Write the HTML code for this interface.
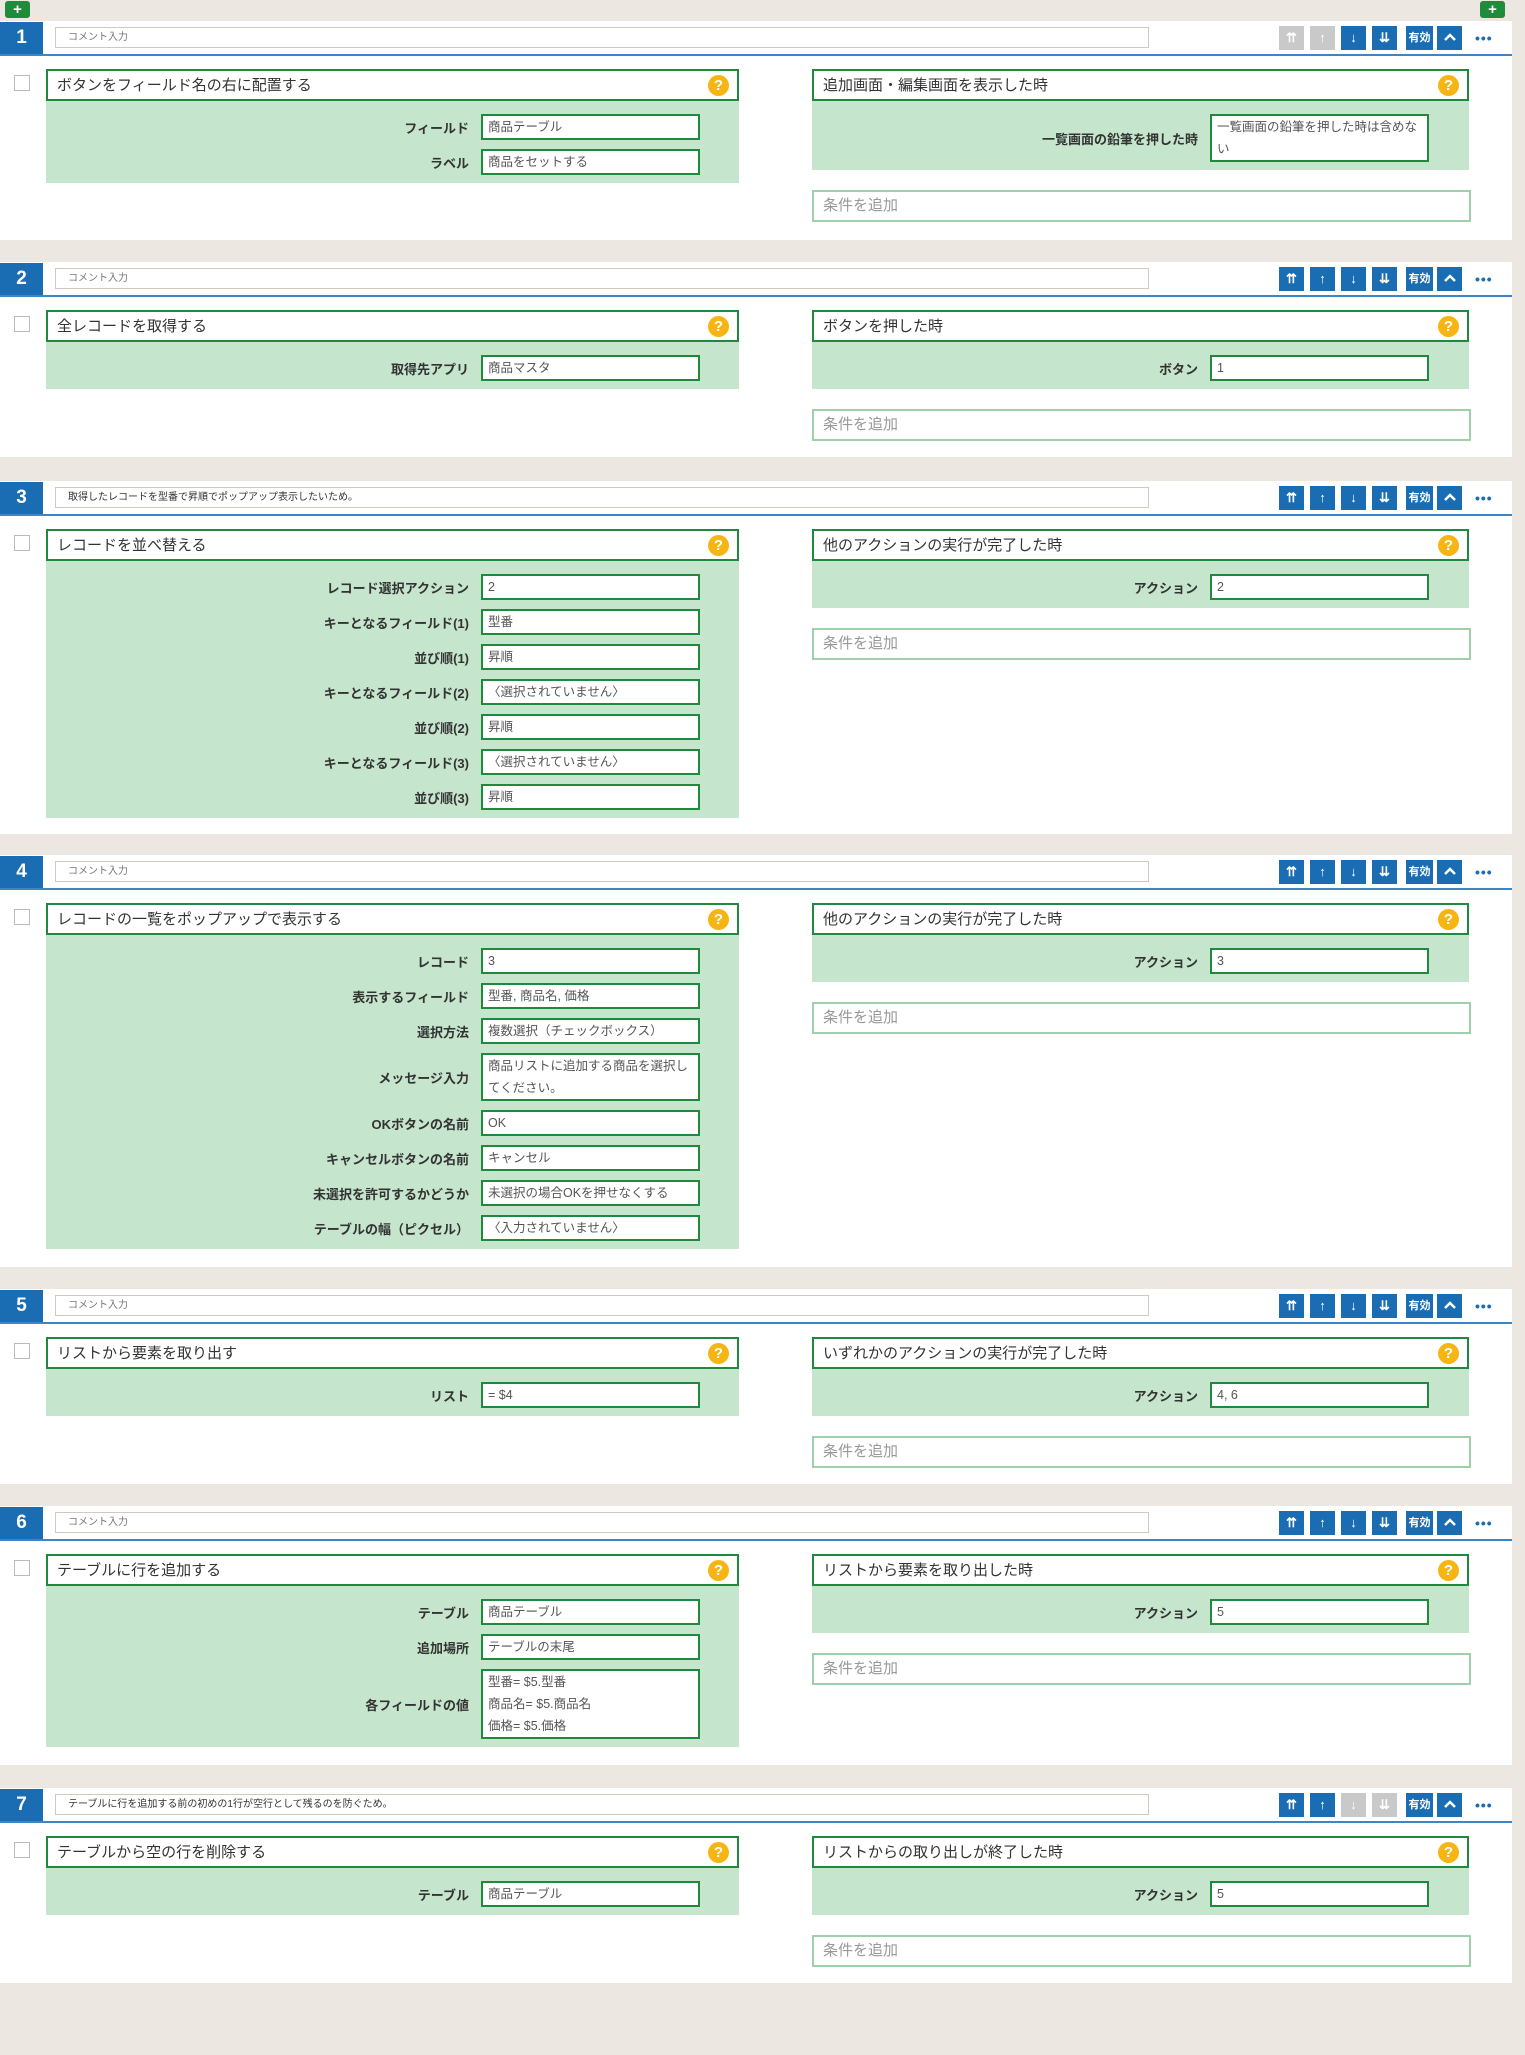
<!DOCTYPE html>
<html><head><meta charset="utf-8"><style>
body{margin:0;width:1525px;height:2055px;background:#ede7e1;font-family:"Liberation Sans","Noto Sans CJK JP",sans-serif;position:relative;overflow:hidden}
.plus{position:absolute;top:1px;width:25px;height:17px;background:#1e8c3a;border-radius:3px;color:#fff;font-weight:bold;font-size:15px;line-height:17px;text-align:center}
.blk{position:absolute;left:0;width:1512px;background:#fff}
.num{position:absolute;left:0;top:1px;width:43px;height:32px;background:#1a6cb3;color:#fff;font-size:19px;font-weight:bold;text-align:center;line-height:32px}
.line{position:absolute;left:0;top:33px;width:1512px;height:2px;background:#3d86c6}
.cmt{position:absolute;left:55px;top:6px;border:1px solid #cfc9c0;font-size:10px;color:#777;line-height:19px;padding-left:12px;box-sizing:border-box;width:1094px;height:21px}
.b{position:absolute;top:5px;width:25px;height:24px;background:#1a6cb3;color:#fff;font-size:13px;font-weight:bold;text-align:center;line-height:24px}
.b svg{display:block;margin:6px auto 0}
.g{background:#c9c9c9}
.dots{position:absolute;top:5px;left:1475px;width:26px;height:24px;color:#1a6cb3;font-size:14px;font-weight:bold;line-height:24px;letter-spacing:1px}
.chk{position:absolute;left:14px;top:54px;width:14px;height:14px;border:1px solid #bbb}
.col{position:absolute;top:48px}
.L{left:46px;width:693px}.R{left:812px;width:657px}
.tt{height:32px;border:2px solid #1f8a3e;box-sizing:border-box;font-size:15px;color:#333;line-height:29px;padding-left:9px;position:relative;background:#fff}
.q{position:absolute;right:8px;top:4px;width:21px;height:21px;border-radius:50%;background:#f6b512;color:#fff;font-weight:bold;font-size:15px;line-height:21px;text-align:center}
.gr{background:#c5e5cc;padding:13px 0 0}
.row{display:flex;align-items:center;margin-bottom:9px}
.row:last-child{margin-bottom:0;padding-bottom:8px}
.lb{font-size:13px;font-weight:bold;color:#333;text-align:right;padding-right:12px;box-sizing:border-box}
.L .lb{width:435px}.R .lb{width:398px}
.in{width:219px;min-height:26px;border:2px solid #1f8a3e;background:#fff;box-sizing:border-box;font-size:12.5px;color:#555;padding:0 5px;line-height:22px}
.cond{margin-top:20px;height:32px;border:2px solid #9fd0ab;box-sizing:border-box;font-size:15px;color:#999;line-height:28px;padding-left:9px;width:659px}
</style></head><body>
<div class="plus" style="left:5px">+</div>
<div class="plus" style="left:1480px">+</div>

<div class="blk" style="top:21px;height:219px">
<div class="num">1</div><div class="line"></div><div class="cmt">コメント入力</div>
<div class="b g" style="left:1279px">⇈</div><div class="b g" style="left:1310px">↑</div><div class="b" style="left:1341px">↓</div><div class="b" style="left:1372px">⇊</div><div class="b" style="left:1406px;width:27px;font-size:11px">有効</div><div class="b" style="left:1437px"><svg width="14" height="10" viewBox="0 0 14 10"><path d="M2 8 L7 3 L12 8" stroke="#fff" stroke-width="2.5" fill="none"/></svg></div><div class="dots">•••</div>
<div class="chk"></div>
<div class="col L"><div class="tt">ボタンをフィールド名の右に配置する<div class="q">?</div></div><div class="gr">
<div class="row"><div class="lb">フィールド</div><div class="in">商品テーブル</div></div>
<div class="row"><div class="lb">ラベル</div><div class="in">商品をセットする</div></div></div></div>
<div class="col R"><div class="tt">追加画面・編集画面を表示した時<div class="q">?</div></div><div class="gr">
<div class="row"><div class="lb">一覧画面の鉛筆を押した時</div><div class="in">一覧画面の鉛筆を押した時は含めない</div></div></div><div class="cond">条件を追加</div></div>
</div>

<div class="blk" style="top:262px;height:195px">
<div class="num">2</div><div class="line"></div><div class="cmt">コメント入力</div>
<div class="b" style="left:1279px">⇈</div><div class="b" style="left:1310px">↑</div><div class="b" style="left:1341px">↓</div><div class="b" style="left:1372px">⇊</div><div class="b" style="left:1406px;width:27px;font-size:11px">有効</div><div class="b" style="left:1437px"><svg width="14" height="10" viewBox="0 0 14 10"><path d="M2 8 L7 3 L12 8" stroke="#fff" stroke-width="2.5" fill="none"/></svg></div><div class="dots">•••</div>
<div class="chk"></div>
<div class="col L"><div class="tt">全レコードを取得する<div class="q">?</div></div><div class="gr">
<div class="row"><div class="lb">取得先アプリ</div><div class="in">商品マスタ</div></div></div></div>
<div class="col R"><div class="tt">ボタンを押した時<div class="q">?</div></div><div class="gr">
<div class="row"><div class="lb">ボタン</div><div class="in">1</div></div></div><div class="cond">条件を追加</div></div>
</div>

<div class="blk" style="top:481px;height:353px">
<div class="num">3</div><div class="line"></div><div class="cmt" style="color:#333">取得したレコードを型番で昇順でポップアップ表示したいため。</div>
<div class="b" style="left:1279px">⇈</div><div class="b" style="left:1310px">↑</div><div class="b" style="left:1341px">↓</div><div class="b" style="left:1372px">⇊</div><div class="b" style="left:1406px;width:27px;font-size:11px">有効</div><div class="b" style="left:1437px"><svg width="14" height="10" viewBox="0 0 14 10"><path d="M2 8 L7 3 L12 8" stroke="#fff" stroke-width="2.5" fill="none"/></svg></div><div class="dots">•••</div>
<div class="chk"></div>
<div class="col L"><div class="tt">レコードを並べ替える<div class="q">?</div></div><div class="gr">
<div class="row"><div class="lb">レコード選択アクション</div><div class="in">2</div></div>
<div class="row"><div class="lb">キーとなるフィールド(1)</div><div class="in">型番</div></div>
<div class="row"><div class="lb">並び順(1)</div><div class="in">昇順</div></div>
<div class="row"><div class="lb">キーとなるフィールド(2)</div><div class="in">〈選択されていません〉</div></div>
<div class="row"><div class="lb">並び順(2)</div><div class="in">昇順</div></div>
<div class="row"><div class="lb">キーとなるフィールド(3)</div><div class="in">〈選択されていません〉</div></div>
<div class="row"><div class="lb">並び順(3)</div><div class="in">昇順</div></div></div></div>
<div class="col R"><div class="tt">他のアクションの実行が完了した時<div class="q">?</div></div><div class="gr">
<div class="row"><div class="lb">アクション</div><div class="in">2</div></div></div><div class="cond">条件を追加</div></div>
</div>

<div class="blk" style="top:855px;height:412px">
<div class="num">4</div><div class="line"></div><div class="cmt">コメント入力</div>
<div class="b" style="left:1279px">⇈</div><div class="b" style="left:1310px">↑</div><div class="b" style="left:1341px">↓</div><div class="b" style="left:1372px">⇊</div><div class="b" style="left:1406px;width:27px;font-size:11px">有効</div><div class="b" style="left:1437px"><svg width="14" height="10" viewBox="0 0 14 10"><path d="M2 8 L7 3 L12 8" stroke="#fff" stroke-width="2.5" fill="none"/></svg></div><div class="dots">•••</div>
<div class="chk"></div>
<div class="col L"><div class="tt">レコードの一覧をポップアップで表示する<div class="q">?</div></div><div class="gr">
<div class="row"><div class="lb">レコード</div><div class="in">3</div></div>
<div class="row"><div class="lb">表示するフィールド</div><div class="in">型番, 商品名, 価格</div></div>
<div class="row"><div class="lb">選択方法</div><div class="in">複数選択（チェックボックス）</div></div>
<div class="row"><div class="lb">メッセージ入力</div><div class="in">商品リストに追加する商品を選択してください。</div></div>
<div class="row"><div class="lb">OKボタンの名前</div><div class="in">OK</div></div>
<div class="row"><div class="lb">キャンセルボタンの名前</div><div class="in">キャンセル</div></div>
<div class="row"><div class="lb">未選択を許可するかどうか</div><div class="in">未選択の場合OKを押せなくする</div></div>
<div class="row"><div class="lb">テーブルの幅（ピクセル）</div><div class="in">〈入力されていません〉</div></div></div></div>
<div class="col R"><div class="tt">他のアクションの実行が完了した時<div class="q">?</div></div><div class="gr">
<div class="row"><div class="lb">アクション</div><div class="in">3</div></div></div><div class="cond">条件を追加</div></div>
</div>

<div class="blk" style="top:1289px;height:195px">
<div class="num">5</div><div class="line"></div><div class="cmt">コメント入力</div>
<div class="b" style="left:1279px">⇈</div><div class="b" style="left:1310px">↑</div><div class="b" style="left:1341px">↓</div><div class="b" style="left:1372px">⇊</div><div class="b" style="left:1406px;width:27px;font-size:11px">有効</div><div class="b" style="left:1437px"><svg width="14" height="10" viewBox="0 0 14 10"><path d="M2 8 L7 3 L12 8" stroke="#fff" stroke-width="2.5" fill="none"/></svg></div><div class="dots">•••</div>
<div class="chk"></div>
<div class="col L"><div class="tt">リストから要素を取り出す<div class="q">?</div></div><div class="gr">
<div class="row"><div class="lb">リスト</div><div class="in">= $4</div></div></div></div>
<div class="col R"><div class="tt">いずれかのアクションの実行が完了した時<div class="q">?</div></div><div class="gr">
<div class="row"><div class="lb">アクション</div><div class="in">4, 6</div></div></div><div class="cond">条件を追加</div></div>
</div>

<div class="blk" style="top:1506px;height:259px">
<div class="num">6</div><div class="line"></div><div class="cmt">コメント入力</div>
<div class="b" style="left:1279px">⇈</div><div class="b" style="left:1310px">↑</div><div class="b" style="left:1341px">↓</div><div class="b" style="left:1372px">⇊</div><div class="b" style="left:1406px;width:27px;font-size:11px">有効</div><div class="b" style="left:1437px"><svg width="14" height="10" viewBox="0 0 14 10"><path d="M2 8 L7 3 L12 8" stroke="#fff" stroke-width="2.5" fill="none"/></svg></div><div class="dots">•••</div>
<div class="chk"></div>
<div class="col L"><div class="tt">テーブルに行を追加する<div class="q">?</div></div><div class="gr">
<div class="row"><div class="lb">テーブル</div><div class="in">商品テーブル</div></div>
<div class="row"><div class="lb">追加場所</div><div class="in">テーブルの末尾</div></div>
<div class="row"><div class="lb">各フィールドの値</div><div class="in" style="line-height:22px">型番= $5.型番<br>商品名= $5.商品名<br>価格= $5.価格</div></div></div></div>
<div class="col R"><div class="tt">リストから要素を取り出した時<div class="q">?</div></div><div class="gr">
<div class="row"><div class="lb">アクション</div><div class="in">5</div></div></div><div class="cond">条件を追加</div></div>
</div>

<div class="blk" style="top:1788px;height:195px">
<div class="num">7</div><div class="line"></div><div class="cmt" style="color:#333">テーブルに行を追加する前の初めの1行が空行として残るのを防ぐため。</div>
<div class="b" style="left:1279px">⇈</div><div class="b" style="left:1310px">↑</div><div class="b g" style="left:1341px">↓</div><div class="b g" style="left:1372px">⇊</div><div class="b" style="left:1406px;width:27px;font-size:11px">有効</div><div class="b" style="left:1437px"><svg width="14" height="10" viewBox="0 0 14 10"><path d="M2 8 L7 3 L12 8" stroke="#fff" stroke-width="2.5" fill="none"/></svg></div><div class="dots">•••</div>
<div class="chk"></div>
<div class="col L"><div class="tt">テーブルから空の行を削除する<div class="q">?</div></div><div class="gr">
<div class="row"><div class="lb">テーブル</div><div class="in">商品テーブル</div></div></div></div>
<div class="col R"><div class="tt">リストからの取り出しが終了した時<div class="q">?</div></div><div class="gr">
<div class="row"><div class="lb">アクション</div><div class="in">5</div></div></div><div class="cond">条件を追加</div></div>
</div>
</body></html>
